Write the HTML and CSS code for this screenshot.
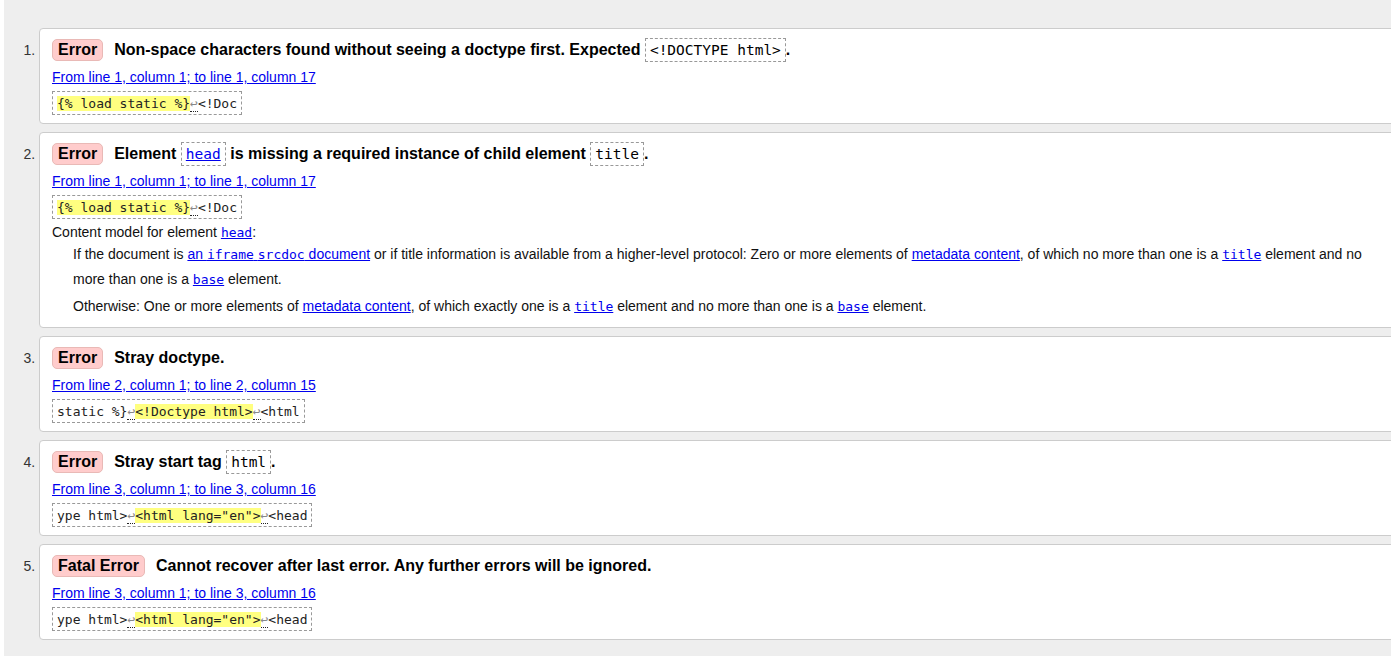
FILE: index.html
```html
<!DOCTYPE html>
<html lang="en">
<head>
<meta charset="utf-8">
<title>Validation messages</title>
<link rel="stylesheet" href="styles.css">
</head>
<body>
<div class="main">
<ol class="messages">
  <li class="msg">
    <p class="head"><strong class="label">Error</strong><span class="text">Non-space characters found without seeing a doctype first. Expected <code class="box">&lt;!DOCTYPE html&gt;</code>.</span></p>
    <p class="loc"><a href="#">From line 1, column 1; to line 1, column 17</a></p>
    <p class="extract"><code class="ex"><b class="hl">{% load static %}</b><span class="lf">↩</span>&lt;!Doc</code></p>
  </li>
  <li class="msg">
    <p class="head"><strong class="label">Error</strong><span class="text">Element <code class="box"><a href="#">head</a></code> is missing a required instance of child element <code class="box">title</code>.</span></p>
    <p class="loc"><a href="#">From line 1, column 1; to line 1, column 17</a></p>
    <p class="extract"><code class="ex"><b class="hl">{% load static %}</b><span class="lf">↩</span>&lt;!Doc</code></p>
    <dl class="model">
      <dt>Content model for element <a href="#"><code class="mono">head</code></a>:</dt>
      <dd>
        <p>If the document is <a href="#">an <code class="mono">iframe</code> <code class="mono">srcdoc</code> document</a> or if title information is available from a higher-level protocol: Zero or more elements of <a href="#">metadata content</a>, of which no more than one is a <a href="#"><code class="mono">title</code></a> element and no more than one is a <a href="#"><code class="mono">base</code></a> element.</p>
        <p>Otherwise: One or more elements of <a href="#">metadata content</a>, of which exactly one is a <a href="#"><code class="mono">title</code></a> element and no more than one is a <a href="#"><code class="mono">base</code></a> element.</p>
      </dd>
    </dl>
  </li>
  <li class="msg">
    <p class="head"><strong class="label">Error</strong><span class="text">Stray doctype.</span></p>
    <p class="loc"><a href="#">From line 2, column 1; to line 2, column 15</a></p>
    <p class="extract"><code class="ex">static %}<span class="lf">↩</span><b class="hl">&lt;!Doctype html&gt;</b><span class="lf">↩</span>&lt;html</code></p>
  </li>
  <li class="msg">
    <p class="head"><strong class="label">Error</strong><span class="text">Stray start tag <code class="box">html</code>.</span></p>
    <p class="loc"><a href="#">From line 3, column 1; to line 3, column 16</a></p>
    <p class="extract"><code class="ex">ype html&gt;<span class="lf">↩</span><b class="hl">&lt;html lang="en"&gt;</b><span class="lf">↩</span>&lt;head</code></p>
  </li>
  <li class="msg">
    <p class="head"><strong class="label">Fatal Error</strong><span class="text">Cannot recover after last error. Any further errors will be ignored.</span></p>
    <p class="loc"><a href="#">From line 3, column 1; to line 3, column 16</a></p>
    <p class="extract"><code class="ex">ype html&gt;<span class="lf">↩</span><b class="hl">&lt;html lang="en"&gt;</b><span class="lf">↩</span>&lt;head</code></p>
  </li>
</ol>
</div>
</body>
</html>
```

FILE: styles.css
```css
html, body {
  margin: 0;
  padding: 0;
  background: #ffffff;
  overflow: hidden;
}

body {
  font-family: "Liberation Sans", Arial, sans-serif;
  font-size: 14px;
  color: #000;
}

.main {
  margin-left: 4px;
  background: #eeeeee;
  min-height: 656px;
  padding-top: 28px;
  overflow: hidden;
}

.messages {
  margin: 0;
  padding: 0 0 0 35px;
  list-style: decimal outside;
}

.msg {
  background: #fff;
  border: 1px solid #cccccc;
  border-radius: 4px;
  margin: 0 -12px 8px 0;
  padding: 10px 25px 8px 12px;
}

.msg::marker {
  font-size: 14px;
  color: #333;
}

.head {
  margin: 0;
  font-size: 16px;
  line-height: 22px;
  font-weight: bold;
}

.label {
  display: inline-block;
  line-height: 18px;
  padding: 1px 5px;
  margin-right: 11px;
  background: #ffcccc;
  border: 1px solid #e9b9b6;
  border-radius: 5px;
}

.box {
  font-family: "DejaVu Sans Mono", monospace;
  font-size: 14.5px;
  font-weight: normal;
  border: 1px dashed #999;
  padding: 3px 4px;
}

a {
  color: #0000ee;
  text-decoration: underline;
}

.loc {
  margin: 6px 0 0;
  line-height: 20px;
}

.extract {
  margin: 4px 0 0;
}

.ex {
  display: inline-block;
  font-family: "DejaVu Sans Mono", monospace;
  font-size: 13px;
  line-height: 19px;
  padding: 2px 4px 1px;
  border: 1px dashed #999;
  color: #222;
}

.hl {
  font-weight: normal;
  background: #ffff80;
}

.lf {
  color: #888;
  border-bottom: 1px dotted #222;
}

.mono {
  font-family: "DejaVu Sans Mono", monospace;
  font-size: 13px;
}

.model {
  margin: 4px 0 0;
  line-height: 19px;
  color: #111;
}

.model dt {
  margin: 0;
}

.model dd {
  margin: 0 0 0 21px;
}

.model dd p {
  margin: 0 0 2px;
  line-height: 25px;
}

.model dd p:last-child {
  margin-bottom: 0;
}
```
